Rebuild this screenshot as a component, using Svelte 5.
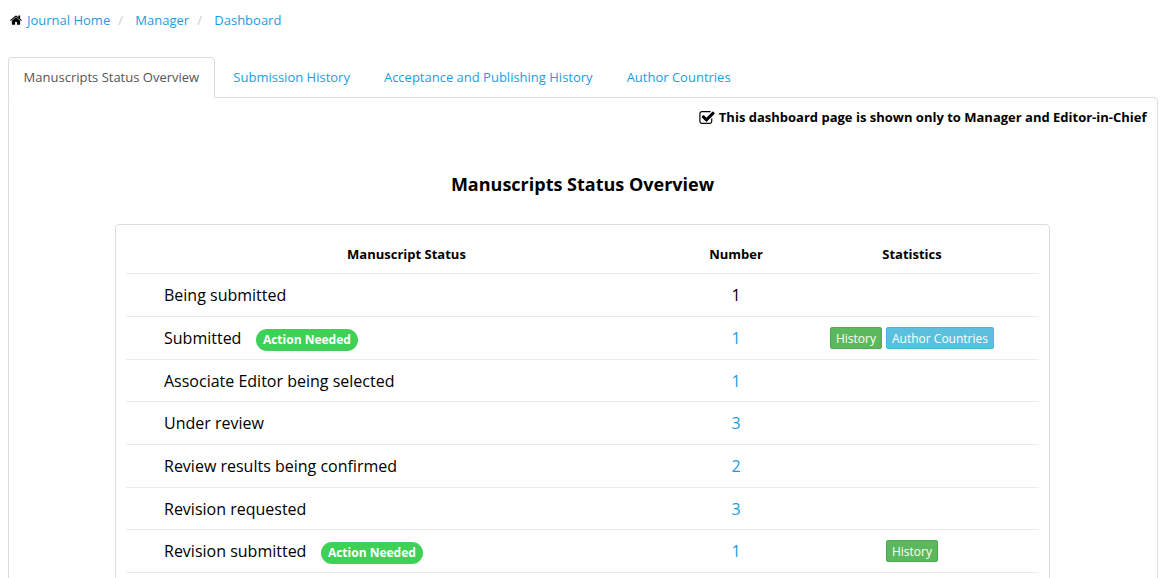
<script>
  const crumbs = ['Journal Home', 'Manager', 'Dashboard'];
  const tabs = ['Manuscripts Status Overview', 'Submission History', 'Acceptance and Publishing History', 'Author Countries'];
  const rows = [
    { label: 'Being submitted', count: 1, plain: true },
    { label: 'Submitted', count: 1, action: true, history: true, countries: true },
    { label: 'Associate Editor being selected', count: 1 },
    { label: 'Under review', count: 3 },
    { label: 'Review results being confirmed', count: 2 },
    { label: 'Revision requested', count: 3 },
    { label: 'Revision submitted', count: 1, action: true, history: true },
  ];
</script>

<div class="page">
  <nav class="crumbs">
    <svg class="home" viewBox="0 0 1664 1312" aria-hidden="true">
      <path d="M1408 768v480q0 26-19 45t-45 19H960V928H704v384H320q-26 0-45-19t-19-45V768q0-1 .5-3t.5-3l575-474 575 474q1 2 1 6zm223-69l-62 74q-8 9-21 11h-3q-13 0-21-7L832 200 140 777q-12 8-24 7-13-2-21-11l-62-74q-8-10-7-23.500t11-21.500L756 55q32-26 76-26t76 26l244 204V64q0-14 9-23t23-9h192q14 0 23 9t9 23v408l219 182q10 8 11 21.500t-7 23.500z" />
    </svg>
    {#each crumbs as crumb, i}
      {#if i > 0}<span class="slash">/</span>{/if}
      <a href="#{i}">{crumb}</a>
    {/each}
  </nav>

  <div class="tabs">
    {#each tabs as tab, i}
      <a class="tab" class:active={i === 0} href="#tab{i}">{tab}</a>
    {/each}
  </div>

  <main class="panel">
    <p class="notice">
      <svg class="check" viewBox="0 0 1664 1408" aria-hidden="true">
        <path d="M1408 802v318q0 119-84.500 203.500T1120 1408H288q-119 0-203.500-84.500T0 1120V288Q0 169 84.500 84.500T288 0h832q63 0 117 25 15 7 18 23 3 17-9 29l-49 49q-14 14-32 8-23-6-45-6H288q-66 0-113 47t-47 113v832q0 66 47 113t113 47h832q66 0 113-47t47-113V866q0-13 9-22l64-64q15-15 35-7t20 29zm231-489l-814 814q-24 24-57 24t-57-24L281 697q-24-24-24-57t24-57l110-110q24-24 57-24t57 24l263 263 647-647q24-24 57-24t57 24l110 110q24 24 24 57t-24 57z" />
      </svg>
      <span>This dashboard page is shown only to Manager and Editor-in-Chief</span>
    </p>
    <h1>Manuscripts Status Overview</h1>
    <section class="card">
      <div class="row head">
        <span>Manuscript Status</span><span>Number</span><span>Statistics</span>
      </div>
      {#each rows as row}
        <div class="row">
          <div class="status">
            <span>{row.label}</span>
            {#if row.action}<b class="badge">Action Needed</b>{/if}
          </div>
          <div class="count">
            {#if row.plain}{row.count}{:else}<a href="#list">{row.count}</a>{/if}
          </div>
          <div class="stats">
            {#if row.history}<a class="btn green" href="#history">History</a>{/if}
            {#if row.countries}<a class="btn blue" href="#countries">Author Countries</a>{/if}
          </div>
        </div>
      {/each}
    </section>
  </main>
</div>

<style>
  :global(body) {
    margin: 0;
    background: #fff;
  }
  .page {
    box-sizing: border-box;
    height: 578px;
    overflow: hidden;
    padding: 0 8px;
    font-family: 'Open Sans', sans-serif;
    font-size: 13px;
    line-height: 20px;
    color: #000;
  }
  a {
    color: #1b9de2;
    text-decoration: none;
  }
  .crumbs {
    display: flex;
    align-items: center;
    height: 20px;
    padding: 10px 0 0 2px;
  }
  .home {
    width: 12px;
    height: 10px;
    margin-right: 5px;
  }
  .slash {
    color: #ccc;
    width: 5px;
    margin: 0 12px 0 8.15px;
  }
  .tabs {
    display: flex;
    gap: 2px;
    margin-top: 27px;
    height: 40px;
    position: relative;
  }
  .tab {
    box-sizing: border-box;
    height: 41px;
    padding: 9px 15px;
    border: 1px solid transparent;
    border-radius: 4px 4px 0 0;
    white-space: nowrap;
  }
  .active {
    margin-right: 0.6px;
    padding: 9px 14.6px;
    color: #555;
    background: #fff;
    border-color: #ddd;
    border-bottom-color: #fff;
  }
  .panel {
    border: 1px solid #ddd;
    border-radius: 0 4px 0 0;
    height: 600px;
  }
  .notice {
    display: flex;
    justify-content: flex-end;
    align-items: center;
    height: 20px;
    margin: 9px 10.5px 0 0;
    font-weight: 700;
  }
  .check {
    width: 16px;
    height: 13px;
    margin-right: 3.500px;
  }
  h1 {
    margin: 45px 1px 0 0;
    text-align: center;
    font-size: 18px;
    line-height: 24px;
    font-weight: 700;
  }
  .card {
    box-sizing: border-box;
    width: 935px;
    height: 500px;
    margin: 28px 0 0 106px;
    padding: 9px 10px;
    border: 1px solid #ddd;
    border-radius: 4px;
  }
  .row {
    box-sizing: border-box;
    display: grid;
    grid-template-columns: 561px 98px 254px;
    align-items: center;
    height: 42.7px;
    border-bottom: 1px solid #e9ebec;
  }
  .head {
    height: 40.2px;
    text-align: center;
    font-weight: 700;
  }
  .status {
    display: flex;
    align-items: center;
    padding: 0.6px 0 0 38px;
    font-size: 16px;
  }
  .badge {
    margin: 4px 0 0 15px;
    padding: 0 7.5px 0 6.5px;
    height: 22px;
    border-radius: 11px;
    background: #3fd057;
    color: #fff;
    font-size: 12px;
    line-height: 22px;
  }
  .count {
    padding-top: 0.6px;
    text-align: center;
    font-size: 16px;
  }
  .stats {
    display: flex;
    justify-content: center;
    gap: 4px;
  }
  .btn {
    box-sizing: border-box;
    height: 22px;
    padding: 0 5px;
    border: 1px solid #4cae4c;
    border-radius: 2px;
    background: #5cb85c;
    color: #fff;
    font-size: 12px;
    line-height: 21.500px;
  }
  .blue {
    border-color: #46b8da;
    background: #5bc0de;
  }
</style>
